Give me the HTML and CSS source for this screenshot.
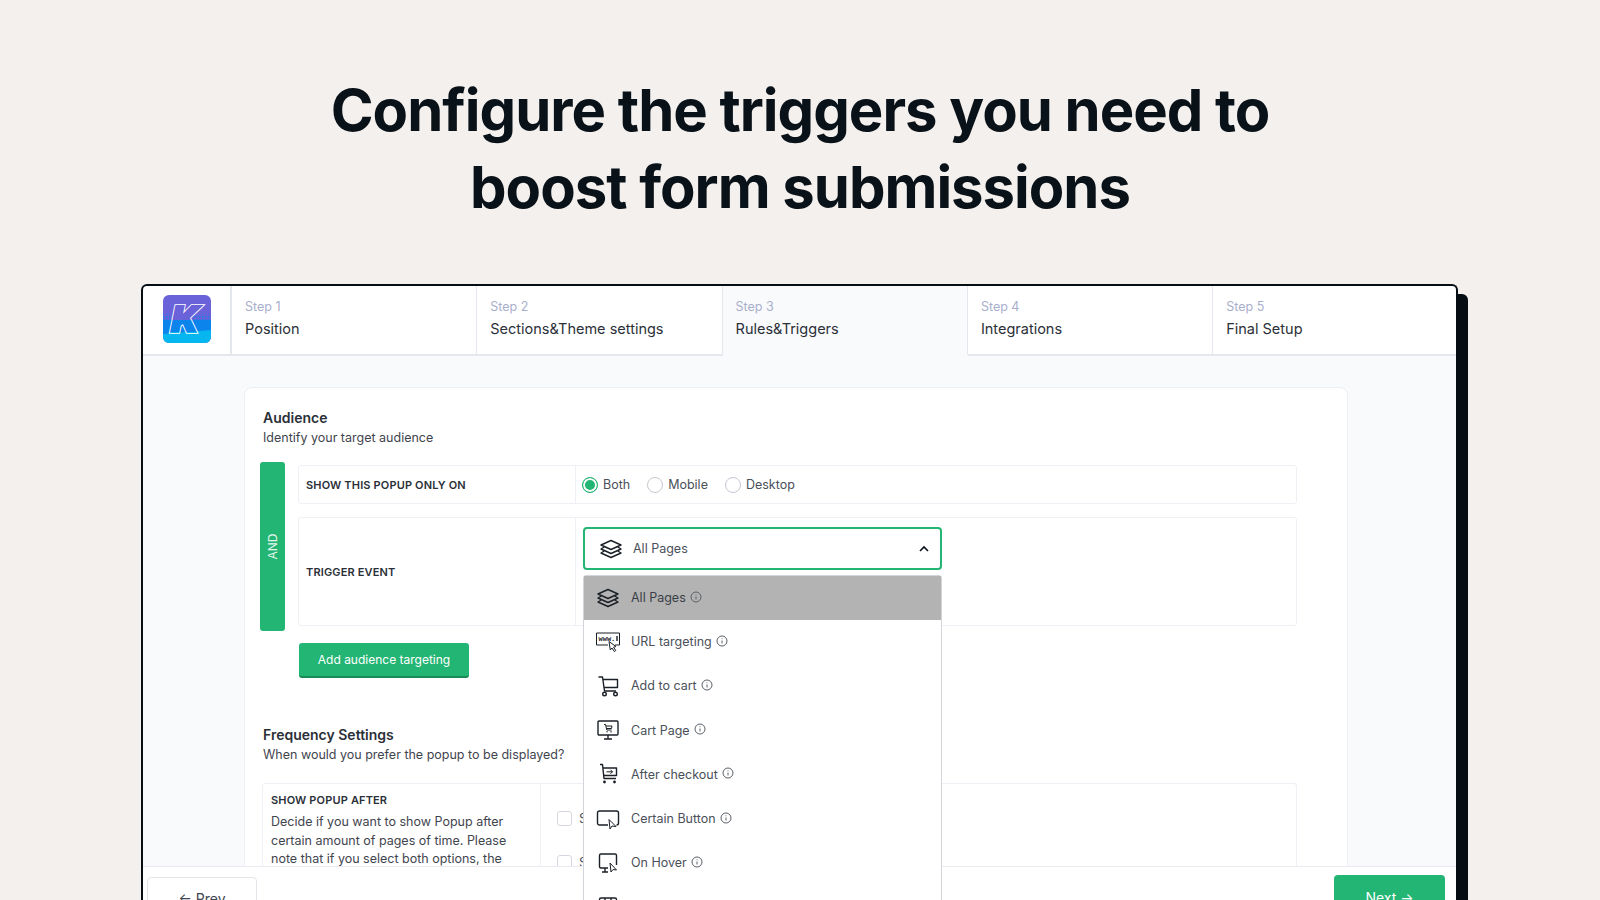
FILE: index.html

```html
<!DOCTYPE html>
<html lang="en">
<head>
    <meta charset="UTF-8">
    <meta name="viewport" content="width=device-width, initial-scale=1.0">
    <title>Configure triggers</title>
    <link rel="stylesheet" href="styles.css">
</head>
<body>
    <h1 class="headline">Configure the triggers you need to<br>boost form submissions</h1>

    <div class="window">
        <div class="steps">
            <div class="logo-cell">
                <svg class="logo" width="48" height="48" viewBox="0 0 48 48">
                    <defs>
                        <pattern id="dots" width="3" height="3" patternUnits="userSpaceOnUse">
                            <rect width="1.5" height="1.5" fill="#1a80e6"/>
                        </pattern>
                        <linearGradient id="bands" gradientUnits="userSpaceOnUse" x1="0" y1="0" x2="0" y2="48">
                            <stop offset="0.52" stop-color="#6a62d9"/>
                            <stop offset="0.52" stop-color="#0b84ec"/>
                            <stop offset="0.78" stop-color="#0b84ec"/>
                            <stop offset="0.78" stop-color="#05b6ef"/>
                        </linearGradient>
                        <text id="logoK" class="logo-k" x="0" y="37" transform="translate(8 0) scale(1.18 1)">K</text>
                    </defs>
                    <rect width="48" height="48" rx="6" fill="#6a62d9"/>
                    <path d="M0 19H48V25H0Z" fill="url(#dots)"/>
                    <path d="M0 25H48V36L0 39Z" fill="#0b84ec"/>
                    <path d="M0 39L48 35V42a6 6 0 0 1-6 6H6a6 6 0 0 1-6-6Z" fill="#05b6ef"/>
                    <use href="#logoK" fill="#fff" stroke="#fff" stroke-width="3.400"/>
                    <use href="#logoK" fill="url(#bands)" stroke="url(#bands)" stroke-width="1.800"/>
                </svg>
            </div>
            <div class="step"><span class="step-num">Step 1</span><span class="step-name">Position</span></div>
            <div class="step"><span class="step-num">Step 2</span><span class="step-name">Sections&amp;Theme settings</span></div>
            <div class="step step-active"><span class="step-num">Step 3</span><span class="step-name">Rules&amp;Triggers</span></div>
            <div class="step"><span class="step-num">Step 4</span><span class="step-name">Integrations</span></div>
            <div class="step"><span class="step-num">Step 5</span><span class="step-name">Final Setup</span></div>
        </div>

        <div class="main">
            <div class="card">
                <h2 class="section-title">Audience</h2>
                <p class="section-sub">Identify your target audience</p>

                <div class="audience">
                    <div class="and-bar"><span>AND</span></div>
                    <div class="audience-rows">
                        <div class="opt-row opt-row-short">
                            <div class="opt-label">SHOW THIS POPUP ONLY ON</div>
                            <div class="opt-radios">
                                <label class="radio radio-on"><i></i>Both</label>
                                <label class="radio"><i></i>Mobile</label>
                                <label class="radio"><i></i>Desktop</label>
                            </div>
                        </div>
                        <div class="opt-row opt-row-tall">
                            <div class="opt-label">TRIGGER EVENT</div>
                            <div class="opt-select">
                                <div class="select">
                                    <svg class="ico" width="24" height="24" viewBox="0 0 24 24"><path d="M12 3.500l10 4.500L12 12.500 2 8zM5.200 10L2 12l10 4.500L22 12l-3.200-2M5.200 14L2 16l10 4.500L22 16l-3.200-2"/></svg>
                                    <span class="select-text">All Pages</span>
                                    <svg class="chevron" width="12" height="12" viewBox="0 0 12 12"><path d="M2 8l4-4 4 4"/></svg>
                                </div>
                            </div>
                        </div>
                    </div>
                </div>

                <button class="btn-add">Add audience targeting</button>

                <h2 class="section-title freq-title">Frequency Settings</h2>
                <p class="section-sub">When would you prefer the popup to be displayed?</p>

                <div class="freq-table">
                    <div class="freq-left">
                        <div class="freq-label">SHOW POPUP AFTER</div>
                        <p class="freq-text">Decide if you want to show Popup after certain amount of pages of time. Please note that if you select both options, the</p>
                    </div>
                    <div class="freq-right">
                        <label class="check"><i></i>Show</label>
                        <label class="check"><i></i>Show</label>
                    </div>
                </div>
            </div>
        </div>

        <div class="footer">
            <button class="btn-prev">← Prev</button>
            <button class="btn-next">Next →</button>
        </div>

        <ul class="dropdown">
            <li class="drop-item drop-current">
                <svg class="ico" width="24" height="24" viewBox="0 0 24 24"><path d="M12 3.500l10 4.500L12 12.500 2 8zM5.200 10L2 12l10 4.500L22 12l-3.200-2M5.200 14L2 16l10 4.500L22 16l-3.200-2"/></svg>
                <span>All Pages</span>
                <svg class="info" width="12" height="12" viewBox="0 0 12 12"><circle cx="6" cy="6" r="5"/><path d="M6 5.500V8.500M6 3.400V4.200"/></svg>
            </li>
            <li class="drop-item">
                <svg class="ico" width="24" height="24" viewBox="0 0 24 24"><path class="thin" d="M0.500 3H23.500M0.500 3V15H12M23.500 3V15H19"/><text class="www" x="2.500" y="10.800">www.</text><path d="M21 6V11"/><path d="M13 11.500L14.300 20 16 18l2.300 3.500 1.500-1-2.300-3.300 2.500-.7z" class="thin"/></svg>
                <span>URL targeting</span>
                <svg class="info" width="12" height="12" viewBox="0 0 12 12"><circle cx="6" cy="6" r="5"/><path d="M6 5.500V8.500M6 3.400V4.200"/></svg>
            </li>
            <li class="drop-item">
                <svg class="ico" width="24" height="24" viewBox="0 0 24 24"><path d="M2.500 3H6.500L8.500 17H20M7 5.500H21.500V13.500H8"/><circle cx="8.500" cy="20" r="1.800"/><circle cx="19.500" cy="20" r="1.800"/></svg>
                <span>Add to cart</span>
                <svg class="info" width="12" height="12" viewBox="0 0 12 12"><circle cx="6" cy="6" r="5"/><path d="M6 5.500V8.500M6 3.400V4.200"/></svg>
            </li>
            <li class="drop-item">
                <svg class="ico" width="24" height="24" viewBox="0 0 24 24"><rect x="2" y="3" width="20" height="14" rx="1"/><path d="M12 17V21M8 21H16"/><path class="thin" d="M8 6.500H9.500L10.800 12H15.500M10 8H16L15.500 10.500H10.500"/><circle class="solid" cx="11" cy="13.800" r=".7"/><circle class="solid" cx="15" cy="13.800" r=".7"/></svg>
                <span>Cart Page</span>
                <svg class="info" width="12" height="12" viewBox="0 0 12 12"><circle cx="6" cy="6" r="5"/><path d="M6 5.500V8.500M6 3.400V4.200"/></svg>
            </li>
            <li class="drop-item">
                <svg class="ico" width="24" height="24" viewBox="0 0 24 24"><path d="M4 2.500H6.500L8 16.500H20M7 6H20.500V13.500H8"/><path class="thin" d="M10.500 9.800H16.500M14.500 7.800l2 2-2 2"/><circle class="solid" cx="8.500" cy="20" r="1.400"/><circle class="solid" cx="18.500" cy="20" r="1.400"/></svg>
                <span>After checkout</span>
                <svg class="info" width="12" height="12" viewBox="0 0 12 12"><circle cx="6" cy="6" r="5"/><path d="M6 5.500V8.500M6 3.400V4.200"/></svg>
            </li>
            <li class="drop-item">
                <svg class="ico" width="24" height="24" viewBox="0 0 24 24"><path d="M12 18H3.500a2 2 0 0 1-2-2V6a2 2 0 0 1 2-2h17a2 2 0 0 1 2 2v10a2 2 0 0 1-2 2"/><path class="thin" d="M13 12.500L14 22l2-3 4 .5z"/></svg>
                <span>Certain Button</span>
                <svg class="info" width="12" height="12" viewBox="0 0 12 12"><circle cx="6" cy="6" r="5"/><path d="M6 5.500V8.500M6 3.400V4.200"/></svg>
            </li>
            <li class="drop-item">
                <svg class="ico" width="24" height="24" viewBox="0 0 24 24"><path d="M12 17H5a1.500 1.500 0 0 1-1.500-1.500V4.500A1.500 1.500 0 0 1 5 3h14a1.500 1.500 0 0 1 1.500 1.500V14"/><path d="M9 17V21M6 21H12"/><path class="thin" d="M14 12l1 9 2-2.500 3.500.5z"/></svg>
                <span>On Hover</span>
                <svg class="info" width="12" height="12" viewBox="0 0 12 12"><circle cx="6" cy="6" r="5"/><path d="M6 5.500V8.500M6 3.400V4.200"/></svg>
            </li>
            <li class="drop-item">
                <svg class="ico" width="24" height="24" viewBox="0 0 24 24"><rect x="3.500" y="3" width="17" height="16" rx="1.500"/><path d="M3.500 7H20.500M9 3V7M15 3V7"/></svg>
            </li>
        </ul>
    </div>
</body>
</html>
```

FILE: styles.css

```css
* {
    margin: 0;
    padding: 0;
    box-sizing: border-box;
}
html, body {
    height: 900px;
    overflow: hidden;
}
body {
    background-color: #f4f0ed;
    font-family: "Inter", "Liberation Sans", sans-serif;
    color: #2b3038;
}
.headline {
    height: 284px;
    padding-top: 72px;
    font-size: 58px;
    line-height: 77px;
    font-weight: 700;
    letter-spacing: -1px;
    text-align: center;
    color: #0a1219;
}

/* window */
.window {
    position: relative;
    display: flex;
    flex-direction: column;
    width: 1317px;
    height: 652px;
    margin-left: 141px;
    background-color: #fff;
    border: 2px solid #060e14;
    border-bottom: 0;
    border-radius: 6px 6px 0 0;
    box-shadow: 10px 10px 0 #060e14;
}

/* steps */
.steps {
    display: grid;
    grid-template-columns: 89px repeat(4, 245.3px) 1fr;
    height: 70px;
    flex-shrink: 0;
}
.logo-cell {
    padding: 9px 0 0 20px;
    border-bottom: 2px solid #e5e7ef;
    border-right: 2px solid #e5e7ef;
}
.logo {
    display: block;
}
.logo-k {
    font-family: "Roboto", sans-serif;
    font-size: 36px;
    font-weight: 900;
    font-style: italic;
}
.step {
    display: flex;
    flex-direction: column;
    padding: 12px 0 0 13px;
    border-right: 1px solid #e5e7ef;
    border-bottom: 2px solid #e5e7ef;
}
.step:last-child {
    border-right: 0;
}
.step-active {
    background-color: #f9fafc;
    border-bottom-color: #f9fafc;
}
.step-num {
    font-size: 12.5px;
    line-height: 18px;
    color: #a8afcc;
}
.step-name {
    margin-top: 3px;
    font-size: 14.5px;
    line-height: 20px;
    color: #2b3038;
}

/* main area */
.main {
    flex: 1;
    min-height: 0;
    overflow: hidden;
    padding: 31px 0 0 101px;
    background-color: #f9fafc;
}
.card {
    width: 1104px;
    height: 600px;
    padding: 20px 24px 0 18px;
    background-color: #fff;
    border: 1px solid #eef0f5;
    border-radius: 8px;
}
.section-title {
    font-size: 14px;
    line-height: 20px;
    font-weight: 600;
    color: #2b3038;
}
.section-sub {
    margin-top: 1px;
    font-size: 12.5px;
    line-height: 18px;
    color: #3f454e;
}
.audience {
    display: flex;
    gap: 13px;
    margin: 15px 0 0 -3px;
}
.and-bar {
    display: flex;
    align-items: center;
    justify-content: center;
    width: 25px;
    height: 169px;
    background-color: #23b573;
    border-radius: 3px;
}
.and-bar span {
    transform: rotate(-90deg);
    font-size: 12px;
    color: #e4f7ee;
}
.audience-rows {
    display: flex;
    flex-direction: column;
    gap: 13px;
    width: 999px;
    padding-top: 3px;
}
.opt-row {
    display: grid;
    grid-template-columns: 277px 1fr;
    border: 1px solid #eef0f5;
    border-radius: 3px;
}
.opt-row-short {
    height: 39px;
}
.opt-row-tall {
    height: 109px;
}
.opt-label {
    display: flex;
    align-items: center;
    padding-left: 7px;
    border-right: 1px solid #eef0f5;
    font-size: 11px;
    font-weight: 600;
    letter-spacing: 0.15px;
    color: #2b3038;
}
.opt-radios {
    display: flex;
    align-items: center;
    padding-left: 6px;
    gap: 17px;
}
.radio {
    display: flex;
    align-items: center;
    gap: 5px;
    font-size: 12.5px;
    color: #4a5059;
}
.radio i {
    width: 16px;
    height: 16px;
    border: 1px solid #c5c8cf;
    border-radius: 50%;
    background-color: #fff;
}
.radio-on i {
    border-color: #23b573;
    background-color: #23b573;
    box-shadow: inset 0 0 0 2px #fff;
}
.opt-select {
    padding: 9px 0 0 7px;
}
.select {
    display: flex;
    align-items: center;
    width: 359px;
    height: 43px;
    padding: 0 10px 0 14px;
    border: 2px solid #23b573;
    border-radius: 4px;
    background-color: #fff;
}
.select-text {
    flex: 1;
    margin-left: 10px;
    font-size: 12.5px;
    color: #4a5059;
}
.chevron path {
    fill: none;
    stroke: #0a1219;
    stroke-width: 1.6;
}
.btn-add {
    display: block;
    width: 170px;
    height: 35px;
    margin: 12px 0 0 36px;
    border: 0;
    border-bottom: 2px solid #178a56;
    border-radius: 3px;
    background-color: #23b573;
    color: #fff;
    font-family: inherit;
    font-size: 12px;
}
.freq-title {
    margin-top: 47px;
}
.freq-table {
    display: grid;
    grid-template-columns: 278px 1fr;
    width: 1035px;
    height: 200px;
    margin: 19px 0 0 -1px;
    border: 1px solid #eef0f5;
    border-radius: 3px;
}
.freq-left {
    padding: 8px 8px 0 8px;
    border-right: 1px solid #eef0f5;
}
.freq-label {
    font-size: 11px;
    line-height: 16px;
    font-weight: 600;
    letter-spacing: 0.15px;
}
.freq-text {
    margin-top: 5px;
    font-size: 12.5px;
    line-height: 18.500px;
    color: #3f454e;
}
.freq-right {
    display: flex;
    flex-direction: column;
    gap: 28px;
    padding: 26px 0 0 16px;
}
.check {
    display: flex;
    align-items: center;
    gap: 7px;
    font-size: 13px;
    color: #4a5059;
}
.check i {
    width: 15px;
    height: 15px;
    border: 1px solid #d5d8de;
    border-radius: 3px;
}

/* dropdown over the card and the footer */
.dropdown {
    position: absolute;
    left: 440px;
    top: 288.500px;
    width: 359px;
    list-style: none;
    background-color: #fff;
    border: 1px solid #d3d5da;
    border-radius: 3px 3px 0 0;
}
.drop-item {
    display: flex;
    align-items: center;
    height: 44.200px;
    padding-left: 12px;
    font-size: 12.5px;
    color: #4a5059;
}
.drop-item span {
    margin-left: 11px;
}
.drop-current {
    background-color: #b3b3b3;
    color: #3a3f47;
}
.ico {
    flex-shrink: 0;
}
.ico path, .ico rect, .ico circle {
    fill: none;
    stroke: #1b2027;
    stroke-width: 1.400;
    stroke-linejoin: round;
}
.ico .thin {
    stroke-width: 1;
}
.ico .solid {
    fill: #1b2027;
    stroke: none;
}
.www {
    font-family: "Liberation Mono", monospace;
    font-size: 7px;
    font-weight: 700;
    fill: #1b2027;
}
.info {
    margin: -2px 0 0 4.500px;
}
.info circle, .info path {
    fill: none;
    stroke: #5a6069;
    stroke-width: 1;
}

/* footer */
.footer {
    display: flex;
    justify-content: space-between;
    align-items: flex-start;
    flex-shrink: 0;
    height: 70px;
    padding: 8px 11px 0 4px;
    background-color: #fff;
    border-top: 1px solid #e9ebf1;
}
.btn-prev {
    width: 110px;
    height: 42px;
    margin-top: 2px;
    border: 1px solid #e3e5ea;
    border-radius: 4px;
    background-color: #fff;
    color: #3f454e;
    font-family: inherit;
    font-size: 14px;
}
.btn-next {
    width: 111px;
    height: 44px;
    border: 0;
    border-radius: 4px;
    background-color: #23b573;
    color: #fff;
    font-family: inherit;
    font-size: 14px;
}
```
